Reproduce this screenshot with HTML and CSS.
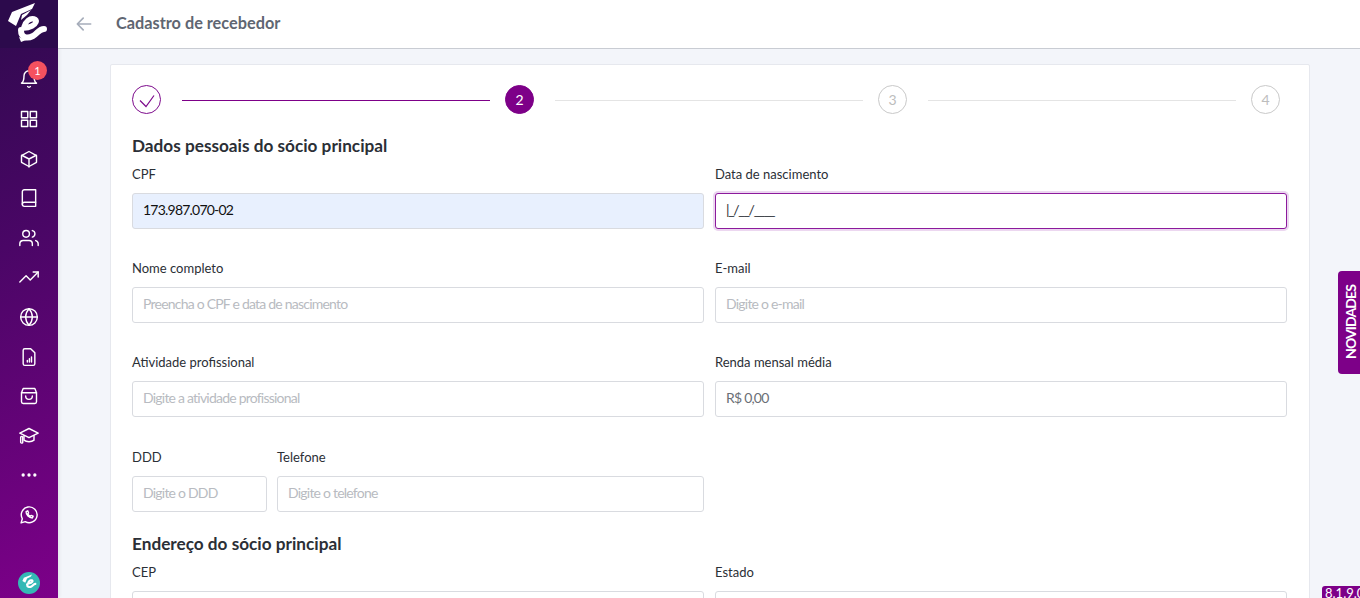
FILE: index.html
```html
<!DOCTYPE html>
<html lang="pt-BR">
<head>
  <meta charset="UTF-8">
  <meta name="viewport" content="width=device-width, initial-scale=1.0">
  <title>Cadastro de recebedor</title>
  <link rel="stylesheet" href="styles.css">
</head>
<body>

  <aside class="sidebar">
    <div class="logo">
      <svg viewBox="0 0 58 48" width="58" height="48">
        <path d="M8 21 L12 12 L35 3 L32 9 L21 14 L16 26 Z" fill="white" />
        <path d="M22 15 L31 10 L27 15 L21 20 Z" fill="white" />
        <path d="M24 27 C26 21 30 18 34 19 C38 20 36 24 32 26 C28 28 26 28 24 28" fill="none" stroke="white" stroke-width="5.500" stroke-linecap="round" />
        <path d="M21 30 C21 38 27 39 33 36 C38 33 39 29 44 29" fill="none" stroke="white" stroke-width="6" stroke-linecap="round" />
        <path d="M19 37 L26 40 L21 42 Z" fill="white" />
      </svg>
    </div>
    <nav class="menu">
      <a class="menu-item bell">
        <svg class="icon" viewBox="0 0 24 24"><path d="M18 8a6 6 0 0 0-12 0c0 7-3 9-3 9h18s-3-2-3-9" /><path d="M13.700 21a2 2 0 0 1-3.400 0" /></svg>
        <span class="badge">1</span>
      </a>
      <a class="menu-item"><svg class="icon" viewBox="0 0 24 24"><rect x="3" y="3" width="7.500" height="7.500" /><rect x="13.500" y="3" width="7.500" height="7.500" /><rect x="13.500" y="13.500" width="7.500" height="7.500" /><rect x="3" y="13.500" width="7.500" height="7.500" /></svg></a>
      <a class="menu-item"><svg class="icon" viewBox="0 0 24 24"><path d="M21 16V8l-9-5-9 5v8l9 5z" /><path d="M3.300 7.500 12 12l8.700-4.500M12 21.500V12" /></svg></a>
      <a class="menu-item"><svg class="icon" viewBox="0 0 24 24"><path d="M4 19.500A2.500 2.500 0 0 1 6.500 17H20" /><path d="M6.500 2H20v20H6.500A2.500 2.500 0 0 1 4 19.500v-15A2.500 2.500 0 0 1 6.500 2z" /></svg></a>
      <a class="menu-item"><svg class="icon" viewBox="0 0 24 24"><path d="M16 21v-2a4 4 0 0 0-4-4H5a4 4 0 0 0-4 4v2" /><circle cx="8.500" cy="7" r="4" /><path d="M23 21v-2a4 4 0 0 0-3-3.900M16 3.100a4 4 0 0 1 0 7.800" /></svg></a>
      <a class="menu-item"><svg class="icon" viewBox="0 0 24 24"><path d="M23 6l-9.500 9.500-5-5L1 18" /><path d="M17 6h6v6" /></svg></a>
      <a class="menu-item"><svg class="icon" viewBox="0 0 24 24"><circle cx="12" cy="12" r="10" /><path d="M2 12h20" /><path d="M12 2a15 15 0 0 1 4 10 15 15 0 0 1-4 10 15 15 0 0 1-4-10 15 15 0 0 1 4-10z" /></svg></a>
      <a class="menu-item"><svg class="icon" viewBox="0 0 24 24"><path d="M14 2H7a2 2 0 0 0-2 2v16a2 2 0 0 0 2 2h10a2 2 0 0 0 2-2V7z" /><path d="M10 18v-2M12.500 18v-4M15 18v-6" /></svg></a>
      <a class="menu-item"><svg class="icon" viewBox="0 0 24 24"><path d="M3 8l2-5h14l2 5v11a2 2 0 0 1-2 2H5a2 2 0 0 1-2-2z" /><path d="M3 8h18M8 12a4 4 0 0 0 8 0" /></svg></a>
      <a class="menu-item"><svg class="icon" viewBox="0 0 24 24"><path d="M12 3 1 8.500 12 14l11-5.500z" /><path d="M6 11.500V17c3 2.500 9 2.500 12 0v-5.500" /><rect x="2" y="12.500" width="2.500" height="8" rx="1" /></svg></a>
      <a class="menu-item"><svg class="icon icon-solid" viewBox="0 0 24 24"><circle cx="5" cy="12" r="2" /><circle cx="12" cy="12" r="2" /><circle cx="19" cy="12" r="2" /></svg></a>
      <a class="menu-item"><svg class="icon" viewBox="0 0 24 24"><path d="M2.500 21.500 4 16.500a9.500 9.500 0 1 1 3.500 3.500z" /><path d="M8.500 8c0 4 3.500 7.500 7.500 7.500l1-2-2.500-1-1 1c-1-.5-2.500-2-3-3l1-1-1-2.500z" /></svg></a>
    </nav>
    <div class="avatar">
      <svg viewBox="0 0 22 22" width="22" height="22">
        <circle cx="11" cy="11" r="11" fill="#34b9b5" />
        <g transform="translate(1.500 1.500) scale(.36)">
          <path d="M8 21 L12 12 L35 3 L31 9 L21 14 L16 26 Z" fill="white" />
          <path d="M24 27 C26 21 30 18 34 19 C38 20 36 24 32 26 C28 28 26 28 24 28" fill="none" stroke="white" stroke-width="6" stroke-linecap="round" />
          <path d="M21 30 C21 38 27 39 33 36 C38 33 39 29 44 29" fill="none" stroke="white" stroke-width="6" stroke-linecap="round" />
        </g>
      </svg>
    </div>
  </aside>

  <div class="main">
    <header class="topbar">
      <svg class="back" viewBox="0 0 24 24"><path d="M20 12H4M11 5l-7 7 7 7" /></svg>
      <h1 class="page-title">Cadastro de recebedor</h1>
    </header>

    <div class="content">
      <section class="card">
        <div class="stepper">
          <span class="step step-done"><svg viewBox="0 0 16 16"><path d="M1 6.500 7 12.500 15 1.500" /></svg></span>
          <span class="step-line step-line-done"></span>
          <span class="step step-current">2</span>
          <span class="step-line"></span>
          <span class="step">3</span>
          <span class="step-line"></span>
          <span class="step">4</span>
        </div>

        <h2 class="section-title">Dados pessoais do sócio principal</h2>
        <div class="form-grid">
          <label class="field"><span class="field-label">CPF</span><input class="input input-filled" value="173.987.070-02"></label>
          <label class="field"><span class="field-label">Data de nascimento</span><input class="input input-focus" value="|_/__/____"></label>
          <label class="field"><span class="field-label">Nome completo</span><input class="input" placeholder="Preencha o CPF e data de nascimento"></label>
          <label class="field"><span class="field-label">E-mail</span><input class="input" placeholder="Digite o e-mail"></label>
          <label class="field"><span class="field-label">Atividade profissional</span><input class="input" placeholder="Digite a atividade profissional"></label>
          <label class="field"><span class="field-label">Renda mensal média</span><input class="input input-money" value="R$ 0,00"></label>
          <div class="phone-row">
            <label class="field"><span class="field-label">DDD</span><input class="input" placeholder="Digite o DDD"></label>
            <label class="field"><span class="field-label">Telefone</span><input class="input" placeholder="Digite o telefone"></label>
          </div>
        </div>

        <h2 class="section-title section-address">Endereço do sócio principal</h2>
        <div class="form-grid">
          <label class="field"><span class="field-label">CEP</span><input class="input"></label>
          <label class="field"><span class="field-label">Estado</span><input class="input"></label>
        </div>
      </section>
    </div>
  </div>

  <a class="news-tab">NOVIDADES</a>
  <span class="version">8.1.9.0</span>

</body>
</html>
```

FILE: styles.css
```css
* {
  box-sizing: border-box;
}

html, body {
  height: 100%;
}

body {
  margin: 0;
  display: flex;
  overflow: hidden;
  background-color: #f3f5fa;
  font-family: "Lato", "Liberation Sans", sans-serif;
  color: #2b2f36;
}

.sidebar {
  width: 58px;
  flex-shrink: 0;
  height: 598px;
  display: flex;
  flex-direction: column;
  align-items: center;
  background: linear-gradient(155deg, #2f0a4e 0%, #4a0666 40%, #7d0089 100%);
  box-shadow: 1px 0 4px rgba(0, 0, 0, 0.08);
}

.logo {
  width: 58px;
  height: 48px;
  background-color: #2c0a4c;
}

.logo svg {
  display: block;
}

.menu {
  display: flex;
  flex-direction: column;
  align-items: center;
  gap: 19.600px;
  padding-top: 21.400px;
}

.menu-item {
  position: relative;
  display: block;
  width: 20px;
  height: 20px;
}

.icon {
  display: block;
  width: 20px;
  height: 20px;
  fill: none;
  stroke: #fff;
  stroke-width: 1.700;
  stroke-linecap: round;
  stroke-linejoin: round;
}

.icon-solid {
  fill: #fff;
  stroke: none;
}

.badge {
  position: absolute;
  top: -8px;
  left: 9px;
  width: 19px;
  height: 19px;
  border-radius: 50%;
  background-color: #f5515f;
  color: #fff;
  font-size: 11px;
  line-height: 19px;
  text-align: center;
}

.avatar {
  margin-top: auto;
  margin-bottom: 4px;
  height: 22px;
}

.avatar svg {
  display: block;
}

.main {
  flex: 1;
  min-width: 0;
}

.topbar {
  height: 49px;
  display: flex;
  align-items: center;
  gap: 22px;
  padding-left: 16px;
  background-color: #fff;
  border-bottom: 1px solid #c9ccd3;
}

.back {
  width: 20px;
  height: 20px;
  fill: none;
  stroke: #a6adba;
  stroke-width: 2;
  stroke-linecap: round;
  stroke-linejoin: round;
}

.page-title {
  margin: 0 0 3px;
  font-size: 16.300px;
  font-weight: 700;
  color: #5f6672;
}

.content {
  padding: 15px 50px 0 52px;
}

.card {
  padding: 20px 22px 0 21px;
  background-color: #fff;
  border: 1px solid #e6e8ee;
  border-radius: 2px;
}

.stepper {
  display: flex;
  align-items: center;
  height: 29px;
  padding-right: 7px;
}

.step {
  width: 29px;
  height: 29px;
  flex-shrink: 0;
  display: flex;
  align-items: center;
  justify-content: center;
  border: 1px solid #c9c9c9;
  border-radius: 50%;
  font-size: 14px;
  color: #bdbdbd;
}

.step-done {
  border-color: #7d0a8c;
}

.step-done svg {
  width: 16px;
  height: 16px;
  margin-top: 5px;
  fill: none;
  stroke: #7d0a8c;
  stroke-width: 1.200;
}

.step-current {
  background-color: #7d0088;
  border-color: #7d0088;
  color: #fff;
}

.step-line {
  flex: 1;
  height: 1px;
  margin: 2px 15px 0 21px;
  background-color: #e4e4e4;
}

.step-line-done {
  background-color: #7d0088;
}

.section-title {
  margin: 21px 0 0;
  font-size: 17.200px;
  line-height: 22px;
  font-weight: 700;
  color: #2b2f36;
}

.section-address {
  margin-top: 21px;
}

.form-grid {
  display: grid;
  grid-template-columns: 1fr 1fr;
  column-gap: 11px;
  row-gap: 30px;
  margin-top: 8px;
}

.field {
  display: block;
}

.field-label {
  display: block;
  height: 18px;
  margin-bottom: 10px;
  font-size: 13px;
  line-height: 18px;
  color: #2b2f36;
}

.input {
  display: block;
  width: 100%;
  height: 36px;
  padding: 0 10px 3px;
  background-color: #fff;
  border: 1px solid #d9dbe0;
  border-radius: 3px;
  font-family: inherit;
  font-size: 14px;
  letter-spacing: -0.780px;
  color: #2b2f36;
  outline: none;
}

.input::placeholder {
  color: #b8bbc1;
}

.input-filled {
  background-color: #e8f0fe;
  color: #111;
}

.input-focus {
  border-color: #8c1a9c;
  box-shadow: 0 0 0 2px #ecd7f0;
  letter-spacing: -1.300px;
}

.input-money {
  color: #6b6f76;
}

.phone-row {
  display: grid;
  grid-template-columns: 135px 1fr;
  column-gap: 10px;
  margin-top: 1px;
}

.news-tab {
  position: absolute;
  top: 271px;
  right: 0;
  width: 22px;
  height: 103px;
  display: flex;
  align-items: center;
  justify-content: center;
  padding-right: 2px;
  background-color: #7d0088;
  border-radius: 0 4px 4px 0;
  color: #fff;
  font-size: 14px;
  font-weight: 700;
  letter-spacing: -0.900px;
  writing-mode: vertical-rl;
  transform: rotate(180deg);
}

.version {
  position: absolute;
  top: 586px;
  left: 1322px;
  width: 38px;
  height: 20px;
  padding-left: 3px;
  background-color: #7d0088;
  border-radius: 3px 0 0 0;
  color: #fff;
  font-size: 13px;
  line-height: 15px;
  white-space: nowrap;
  overflow: hidden;
}
```
